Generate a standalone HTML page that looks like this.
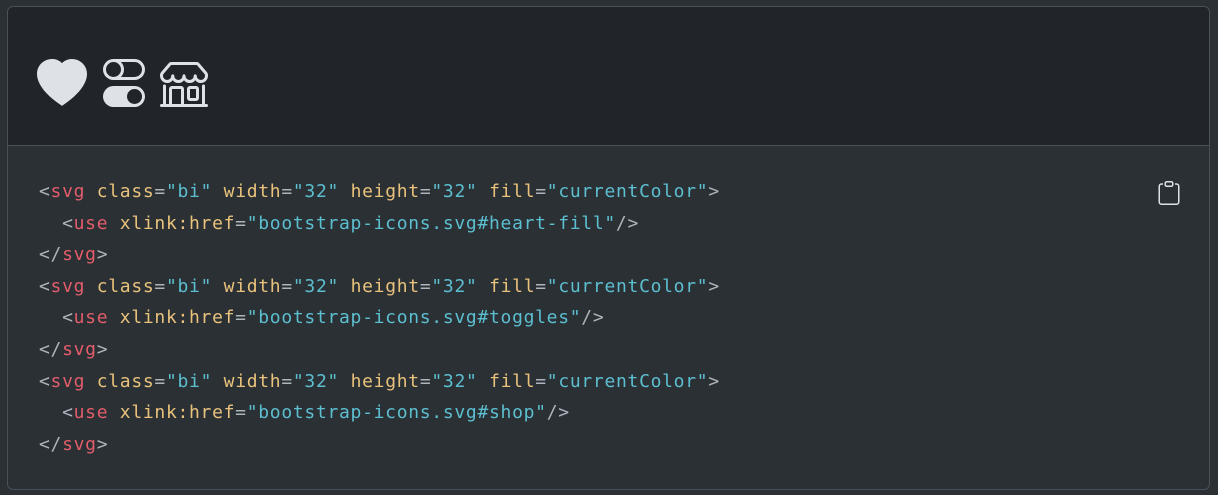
<!DOCTYPE html>
<html><head><style>
html,body{margin:0;background:#2b3035;width:1218px;height:495px;overflow:hidden}
.card{position:absolute;left:7px;top:6px;width:1201px;height:482px;border:1px solid #495057;border-radius:6px;overflow:hidden;background:#2b3035}
.top{height:138px;background:#212529;border-bottom:1px solid #495057;position:relative}
.top svg{position:absolute;top:52px;fill:#dee2e6}
pre{position:absolute;left:31px;top:169px;margin:0;font-family:"DejaVu Sans Mono","Liberation Mono",monospace;font-size:18px;letter-spacing:0.7px;line-height:31.6px;color:#adb5bd}
.t{color:#e35d6a}.a{color:#e9c27b}.v{color:#5cbfd0}
.clip{position:absolute;left:1149px;top:174px;fill:#dee2e6}
</style></head><body>
<div class="card">
<div class="top">
<svg style="left:29px" width="50" height="50" viewBox="0 0 16 16"><path fill-rule="evenodd" d="M8 1.314C12.438-3.248 23.534 4.735 8 15-7.534 4.736 3.562-3.248 8 1.314z"/></svg>
<svg style="left:92px" width="48" height="48" viewBox="0 0 16 16"><path d="M4.5 9a3.5 3.5 0 1 0 0 7h7a3.5 3.5 0 1 0 0-7h-7zm7 6a2.5 2.5 0 1 1 0-5 2.5 2.5 0 0 1 0 5zm-7-14a2.5 2.5 0 1 0 0 5 2.5 2.5 0 0 0 0-5zm2.45 0A3.49 3.49 0 0 1 8 3.5 3.49 3.49 0 0 1 6.95 6h4.55a2.5 2.5 0 0 0 0-5H6.95zM4.5 0h7a3.5 3.5 0 1 1 0 7h-7a3.5 3.5 0 1 1 0-7z"/></svg>
<svg style="left:152px" width="48" height="48" viewBox="0 0 16 16"><path d="M2.97 1.35A1 1 0 0 1 3.730 1h8.54a1 1 0 0 1 .76.35l2.609 3.044A1.5 1.5 0 0 1 16 5.37v.255a2.375 2.375 0 0 1-4.25 1.458A2.371 2.371 0 0 1 9.875 8 2.37 2.37 0 0 1 8 7.083 2.37 2.37 0 0 1 6.125 8a2.37 2.37 0 0 1-1.875-.917A2.375 2.375 0 0 1 0 5.625V5.37a1.5 1.5 0 0 1 .361-.976l2.61-3.045zm1.78 4.275a1.375 1.375 0 0 0 2.75 0 .5.5 0 0 1 1 0 1.375 1.375 0 0 0 2.75 0 .5.5 0 0 1 1 0 1.375 1.375 0 1 0 2.750 0V5.37a.5.5 0 0 0-.12-.325L12.27 2H3.73L1.12 5.045A.5.5 0 0 0 1 5.37v.255a1.375 1.375 0 0 0 2.75 0 .5.5 0 0 1 1 0zM1.5 8.5A.5.5 0 0 1 2 9v6h1v-5a1 1 0 0 1 1-1h3a1 1 0 0 1 1 1v5h6V9a.5.5 0 0 1 1 0v6h.5a.5.5 0 0 1 0 1H.5a.5.5 0 0 1 0-1H1V9a.5.5 0 0 1 .5-.5zM4 15h3v-5H4v5zm5-5a1 1 0 0 1 1-1h2a1 1 0 0 1 1 1v3a1 1 0 0 1-1 1h-2a1 1 0 0 1-1-1v-3zm3 0h-2v3h2v-3z"/></svg>
</div>
<svg class="clip" width="24" height="24" viewBox="0 0 16 16"><path d="M4 1.5H3a2 2 0 0 0-2 2V14a2 2 0 0 0 2 2h10a2 2 0 0 0 2-2V3.5a2 2 0 0 0-2-2h-1v1h1a1 1 0 0 1 1 1V14a1 1 0 0 1-1 1H3a1 1 0 0 1-1-1V3.5a1 1 0 0 1 1-1h1v-1z"/><path d="M9.5 1a.5.5 0 0 1 .5.5v1a.5.5 0 0 1-.5.5h-3a.5.5 0 0 1-.5-.5v-1a.5.5 0 0 1 .5-.5h3zm-3-1A1.5 1.5 0 0 0 5 1.5v1A1.5 1.5 0 0 0 6.5 4h3A1.5 1.5 0 0 0 11 2.5v-1A1.5 1.5 0 0 0 9.5 0h-3z"/></svg>
<pre>&lt;<span class="t">svg</span> <span class="a">class</span>=<span class="v">"bi"</span> <span class="a">width</span>=<span class="v">"32"</span> <span class="a">height</span>=<span class="v">"32"</span> <span class="a">fill</span>=<span class="v">"currentColor"</span>&gt;
  &lt;<span class="t">use</span> <span class="a">xlink:href</span>=<span class="v">"bootstrap-icons.svg#heart-fill"</span>/&gt;
&lt;/<span class="t">svg</span>&gt;
&lt;<span class="t">svg</span> <span class="a">class</span>=<span class="v">"bi"</span> <span class="a">width</span>=<span class="v">"32"</span> <span class="a">height</span>=<span class="v">"32"</span> <span class="a">fill</span>=<span class="v">"currentColor"</span>&gt;
  &lt;<span class="t">use</span> <span class="a">xlink:href</span>=<span class="v">"bootstrap-icons.svg#toggles"</span>/&gt;
&lt;/<span class="t">svg</span>&gt;
&lt;<span class="t">svg</span> <span class="a">class</span>=<span class="v">"bi"</span> <span class="a">width</span>=<span class="v">"32"</span> <span class="a">height</span>=<span class="v">"32"</span> <span class="a">fill</span>=<span class="v">"currentColor"</span>&gt;
  &lt;<span class="t">use</span> <span class="a">xlink:href</span>=<span class="v">"bootstrap-icons.svg#shop"</span>/&gt;
&lt;/<span class="t">svg</span>&gt;</pre>
</div>
</body></html>
